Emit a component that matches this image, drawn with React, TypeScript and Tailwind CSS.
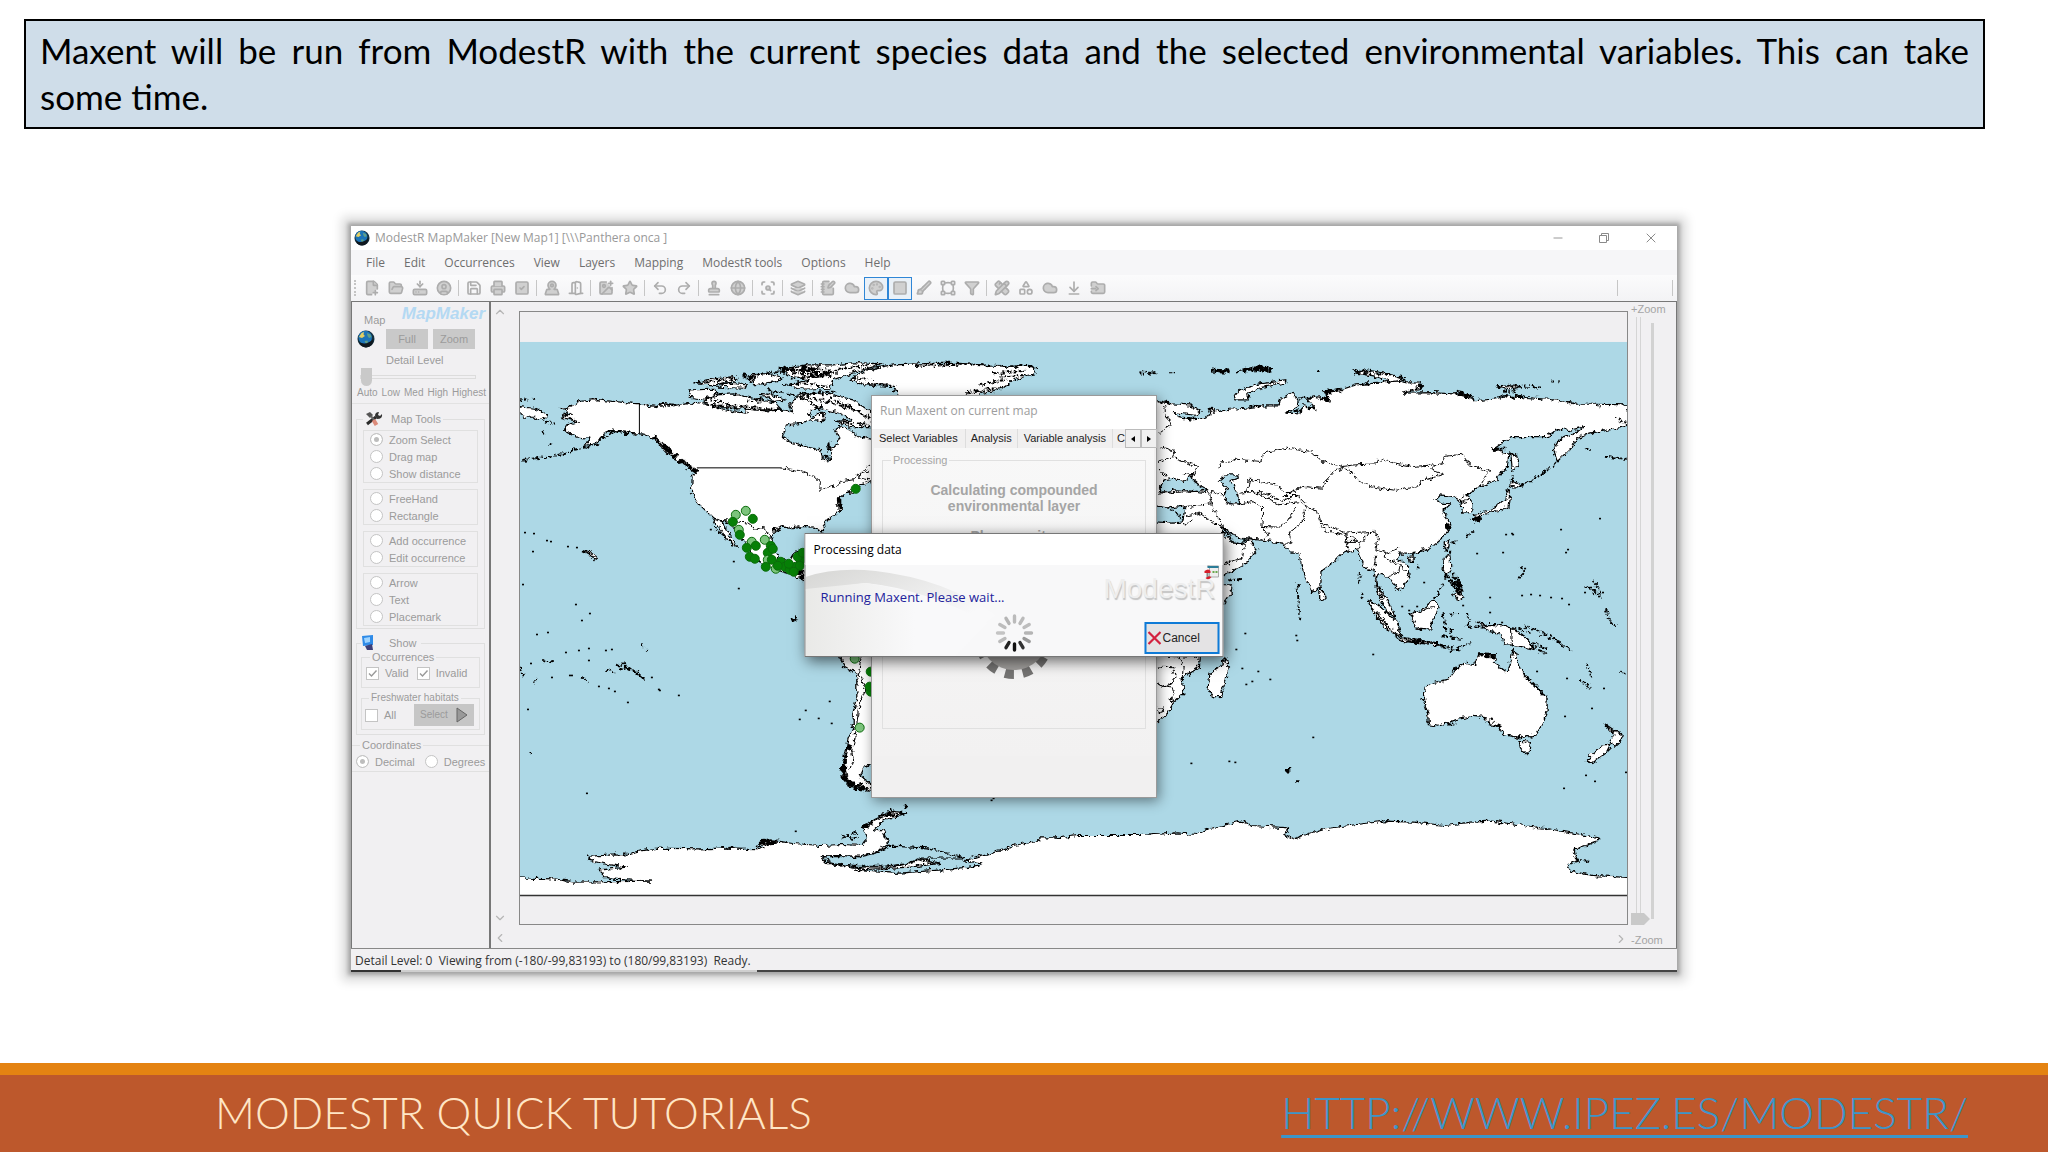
import * as React from "react";
import {
  ArrowDownToLine,
  Brush,
  ChevronDown,
  ChevronLeft,
  ChevronRight,
  ChevronUp,
  CircleUser,
  Cloud,
  DoorOpen,
  FilePlus2,
  FolderInput,
  FolderOpen,
  Funnel,
  Globe,
  HardDriveDownload,
  ImagePlus,
  Layers,
  type LucideIcon,
  MapPinned,
  Minus,
  NotebookPen,
  Palette,
  PencilRuler,
  Printer,
  Redo2,
  Save,
  ScanSearch,
  Shapes,
  Square,
  SquareCheck,
  Stamp,
  Star,
  Undo2,
  VectorSquare,
  X,
} from "lucide-react";

type ToolItem = { readonly icon: LucideIcon; readonly label: string; readonly active?: boolean; readonly solid?: boolean };

const MENU = ["File", "Edit", "Occurrences", "View", "Layers", "Mapping", "ModestR tools", "Options", "Help"];

const TOOL_GROUPS: ReadonlyArray<ReadonlyArray<ToolItem>> = [
  [
    { icon: FilePlus2, label: "New map", solid: true },
    { icon: FolderOpen, label: "Open map", solid: true },
    { icon: HardDriveDownload, label: "Import", solid: true },
    { icon: CircleUser, label: "Open from database", solid: true },
  ],
  [
    { icon: Save, label: "Save" },
    { icon: Printer, label: "Print", solid: true },
    { icon: SquareCheck, label: "Check", solid: true },
  ],
  [
    { icon: MapPinned, label: "Places", solid: true },
    { icon: DoorOpen, label: "Close map" },
  ],
  [
    { icon: ImagePlus, label: "Add image", solid: true },
    { icon: Star, label: "Favourites", solid: true },
  ],
  [
    { icon: Undo2, label: "Undo" },
    { icon: Redo2, label: "Redo" },
  ],
  [
    { icon: Stamp, label: "Download occurrences", solid: true },
    { icon: Globe, label: "World", solid: true },
  ],
  [{ icon: ScanSearch, label: "Inspect", solid: true }],
  [{ icon: Layers, label: "Layers", solid: true }],
  [
    { icon: NotebookPen, label: "Edit data", solid: true },
    { icon: Cloud, label: "Cloud", solid: true },
    { icon: Palette, label: "Show colours", active: true, solid: true },
    { icon: Square, label: "Show frame", active: true, solid: true },
    { icon: Brush, label: "Clean", solid: true },
    { icon: VectorSquare, label: "Cut" },
    { icon: Funnel, label: "Filter", solid: true },
  ],
  [
    { icon: PencilRuler, label: "Measure", solid: true },
    { icon: Shapes, label: "Polygon" },
    { icon: Cloud, label: "Area", solid: true },
    { icon: ArrowDownToLine, label: "Anchor" },
    { icon: FolderInput, label: "Export", solid: true },
  ],
];

// Land outlines. Each sheet carries its own digitising origin and scale.
const AMERICA_LAND = [
  "M180 235L205 232L235 215L285 209L345 215L418 222L470 230L490 220L520 228L560 218L600 222L640 222L660 235L700 245L735 250L740 238L800 243L860 240L880 250L870 225L900 190L930 215L960 222L925 250L940 270L910 280L860 285L848 320L870 335L910 348L962 360L968 385L985 395L998 380L985 355L1015 345L1018 325L1005 300L1020 290L1050 300L1075 320L1115 328L1140 400L1115 455L1080 465L1065 490L1040 490L1020 505L1025 540L985 570L970 590L975 625L965 605L940 592L910 590L880 597L850 592L825 605L815 635L825 660L840 690L870 690L885 665L930 655L930 760L880 735L845 725L800 705L760 690L735 640L715 610L690 580L665 572L680 600L712 650L690 640L655 590L640 565L600 525L575 490L577 440L590 430L540 395L500 370L460 325L430 313L365 310L340 300L315 310L295 335L250 350L270 325L230 322L195 305L200 285L235 275L180 262L215 252L195 240Z",
  "M60 230L100 235L145 255L130 268L105 262L80 262L60 255Z",
  "M570 180L640 178L655 190L620 208L565 202Z",
  "M610 215L650 195L700 192L760 205L830 220L845 240L780 240L700 232L640 228Z",
  "M585 162L620 150L700 140L715 150L650 165Z",
  "M650 172L690 160L740 165L735 175Z",
  "M750 135L800 132L850 145L830 155L760 165Z",
  "M840 118L920 105L1000 105L1070 98L1150 102L1090 120L1040 135L1000 150L990 175L900 178L870 165L930 150L880 140Z",
  "M780 190L820 195L860 210L820 215Z",
  "M900 200L940 190L1000 195L1060 210L1120 250L1160 290L1100 290L1050 290L1005 275L1060 270L1020 250L960 235L930 215Z",
  "M950 255L980 250L970 275L930 272Z",
  "M1050 150L1100 120L1180 105L1300 100L1380 100L1480 108L1600 110L1610 130L1540 150L1510 175L1450 190L1400 210L1200 200L1185 170L1100 165Z",
  "M245 662L275 670L292 686L282 690L270 675Z",
];

const AMERICA_BORDERS = [
  "M845 414L900 422L945 440L962 455L960 482L1005 468L1030 455L1060 450L1085 425L1115 405",
  "M640 565L665 572L700 575L745 580L770 600L790 592L815 628",
  "M1115 420L1085 430L1080 445L1110 450",
];

const AMERICA_ROUGH = [
  "M70 390L110 385L140 381M150 380L190 372L230 358L260 352L300 340",
  "M270 345L310 325L345 305M190 250L215 268M60 208L85 210M98 207L102 206M125 305L135 310M150 338L155 343M135 275L165 282",
  "M590 160L640 155L700 145M640 165L700 155M760 140L820 128L900 120L980 118M850 112L910 125L960 108M870 150L930 135L1040 115L1110 106M850 165L900 160L990 168M880 130L1020 128M900 142L1000 138",
  "M620 205L690 225L760 232L840 238M640 225L720 240M800 180L880 195L940 188L1010 185M920 200L1000 220L1080 245M990 205L1060 235L1115 270M950 230L975 262M1010 275L1110 285M780 205L830 185M970 190L960 255",
  "M1015 215L1070 240L1110 262M1050 145L1120 150M1080 160L1180 168M740 215L800 210M480 228L520 222",
  "M640 590L700 645M1040 490L1070 478M820 600L850 592L900 590M900 700L915 730",
  "M1250 108L1400 104L1560 110M1440 165L1520 150M1480 130L1580 122M1400 190L1460 180L1510 170M1180 180L1200 190",
  "M1560 105L1620 112M1500 140L1570 135M190 300L215 312M330 303L395 310",
];

const AMERICA_DENSE = [
  "M460 322L485 342L512 365M540 392L588 424M495 350L530 385M840 118L880 120M905 112L945 122M1018 505L1020 540M880 865L895 875M875 872L890 866M895 690L908 750M985 340L990 365M975 375L992 388M730 135L765 148M930 140L990 132",
];

const EURASIA_LAND = [
  "M30 180L60 184L100 192L150 195L185 215L170 226L105 218L120 232L150 240L180 238L215 225L210 205L235 215L270 208L320 205L360 198L420 198L422 180L455 160L475 175L478 200L440 220L485 222L492 195L530 210L500 175L550 170L575 180L550 155L610 148L650 135L730 128L760 120L800 128L850 130L845 148L790 160L880 158L940 162L980 160L1010 182L1060 178L1100 168L1150 172L1230 178L1285 185L1310 193L1370 193L1468 195L1468 258L1400 272L1340 282L1310 300L1295 325L1255 365L1243 330L1260 300L1310 280L1335 260L1290 272L1265 265L1225 290L1120 290L1060 330L1110 340L1105 380L1070 420L1020 442L985 465L998 490L998 518L970 520L965 488L940 470L905 465L890 480L905 490L935 492L910 515L925 535L935 560L905 600L870 628L820 640L780 640L775 655L805 680L812 715L780 755L755 720L725 700L712 710L715 740L750 790L768 830L740 815L712 750L705 690L680 690L655 630L610 640L580 670L545 695L545 740L520 762L495 710L478 640L455 640L430 610L375 602L330 598L300 595L265 575L245 555L250 580L280 610L315 612L328 598L355 630L320 670L250 710L30 710Z",
  "M30 735H278L275 760L250 795L30 960Z",
  "M285 170L300 150L360 132L440 122L438 130L370 142L325 160L330 180L290 180Z",
  "M645 98L680 90L740 100L800 120L760 125L700 108Z",
  "M1070 140L1110 133L1145 140L1110 150Z",
  "M1115 340L1130 345L1138 380L1120 388Z",
  "M1105 440L1120 425L1148 435L1130 445Z",
  "M1105 450L1115 465L1110 500L1080 512L1050 518L1025 528L1015 545L1005 525L1040 515L1080 495L1100 480Z",
  "M915 610L932 600L928 625L918 632Z",
  "M808 655L825 650L825 665L810 665Z",
  "M915 655L932 645L935 680L925 710L912 690Z",
  "M940 762L965 750L975 775L955 782Z",
  "M542 745L560 770L548 782L538 765Z",
  "M685 785L715 800L770 850L785 890L745 870L710 830Z",
];

const EURASIA_WATER = [
  "M60 445L75 420L105 415L130 425L160 403L155 415L185 440L205 450L170 455L110 450L65 458Z",
  "M240 420L260 405L295 405L297 415L272 425L290 450L302 492L270 492L255 460L265 445Z",
  "M30 495L90 505L137 498L130 546L100 550L30 545Z",
  "M245 560L275 580L300 595L320 600L305 612L280 605Z",
];

const EURASIA_BORDERS = [
  "M235 385L245 370L290 358L365 365L370 340L440 325L515 335L550 365L610 380L650 375L710 372L715 358L770 370L820 380L885 375L912 372L915 350L970 343L990 375L1050 393L1025 435",
  "M610 380L640 400L660 425L700 442L770 452L835 440L845 425L912 402L875 390L885 375",
  "M610 382L575 400L548 445L490 440L445 460L410 435L330 418L325 455L380 460L430 485L470 465",
  "M300 460L345 455L420 495L480 485L500 500L535 515L545 550L620 580L700 575L718 590L710 630L740 640L780 625",
  "M300 492L340 485L370 502L368 560L415 562L445 545L470 500M370 562L385 585L375 602",
  "M495 505L495 540L450 580L455 610L430 610",
  "M545 560L560 572L640 595L655 605L620 605L630 630M620 580L625 625M690 580L665 610L655 630M710 645L705 680M740 640L735 655L780 680L775 700L750 710M760 660L800 690",
  "M215 470L225 510L248 555M140 500L215 492M140 530L180 520L250 565M160 540L130 560M315 612L310 655L250 675M215 455L245 465L265 490",
  "M75 190L78 220L95 255L60 280M60 320L100 330L105 350L55 365M105 355L175 380L165 400L130 405M60 385L80 410",
  "M55 460L170 455L215 460L215 492M430 470L480 470L500 490M960 480L1005 450M990 480L960 490",
];

const EURASIA_ROUGH = [
  "M215 92L275 95M290 95L340 84L405 85M320 90L395 92M0 97L55 100M90 97H112M640 90L700 95L760 108L800 112M650 98L720 102M535 90H545",
  "M1075 138L1140 140M1155 140L1200 143M1095 155L1130 158M1240 125H1245M1258 127H1262",
  "M55 185L90 186M120 232L180 238M210 205L225 220M330 198L365 200M440 218L490 210M555 155L610 148M680 130L730 128M790 158L850 140M950 158L1000 170M1100 170L1160 172M1285 190H1300M1370 195L1385 200M1435 235L1463 250M480 175L530 172L572 182M500 200L530 210",
  "M1060 330L1100 325M1110 340L1130 350M1120 390L1122 430M1148 435L1190 415L1240 380L1255 365M1340 325L1355 332M1395 348L1440 355L1463 357",
  "M1000 535L1015 550L1020 525M940 608L960 605M980 590L1005 575M905 600L935 560M820 640L870 628M835 685L840 680M680 690L700 685M662 700L660 730M665 760L670 775",
  "M930 630V645M915 710L950 715L965 740M940 700L960 720L970 755M930 725L965 730M910 735L880 790M945 740L960 765M920 700L955 760M720 740L730 780M270 722L305 718M475 730L480 845M60 450L100 460M90 500L130 540M440 460L470 455M245 560L270 585",
  "M1145 680L1155 700L1140 715M1340 740L1390 770M1360 720L1385 760M1400 810L1410 835L1430 860",
];

const EURASIA_DENSE = [
  "M310 92L350 86L400 88M225 93L270 95M555 157L605 150M560 175L575 185M840 130L850 145M960 160L1000 170M1005 540L1015 530M942 725L965 740M955 740L962 765M1060 330L1078 328M925 555L930 570",
];

const SOUTH_LAND = [
  "M945 160L965 200L1000 222L1000 300L990 340L990 380L975 420L968 470L955 520L975 555L1035 575L1045 560L1010 530L1020 505L1050 490V160Z",
  "M1820 165L1960 170L1957 205L1912 235L1917 280L1887 310L1872 340L1842 368L1820 368Z",
  "M2033 172L2042 190L2035 240L2020 290L1998 292L1984 270L1990 220L2020 200Z",
  "M2590 262L2620 248L2660 238L2680 208L2710 188L2732 195L2740 165L2790 165L2787 190L2825 220L2832 190L2840 145L2850 190L2870 225L2910 270L2935 300L2935 330L2925 365L2905 405L2860 415L2815 405L2800 380L2775 375L2765 355L2730 350L2680 360L2630 380L2602 375L2600 340L2588 300Z",
  "M2856 425L2888 428L2885 455L2875 462L2860 445Z",
  "M3095 372L3120 390L3148 405L3140 425L3125 440L3112 430L3122 405Z",
  "M3045 485L3060 465L3095 435L3112 435L3100 460L3060 492Z",
  "M2433 5L2460 15L2515 65L2525 108L2490 90L2450 40Z",
  "M2550 42L2580 30L2620 0L2630 20L2615 60L2610 88L2570 85Z",
  "M2740 65L2765 75L2790 75L2840 85L2880 120L2900 150L2860 140L2820 135L2800 100L2770 95Z",
  "M2512 112L2560 120L2620 128L2650 138L2590 132L2530 125Z",
  "M30 835L150 838L210 848L425 845L300 838L275 812L355 803L300 795L248 782L248 770L350 765L390 755L440 746L560 748L640 745L740 748L725 730L760 722L820 732L900 738L960 735L1015 738L1030 715L1020 690L1050 660L1100 635L1140 640L1070 665L1045 690L1075 695L1088 735L1050 760L1010 770L900 770L915 790L990 803L1080 802L1140 795L1180 778L1235 792L1150 803L990 812L1110 822L1230 812L1345 800L1350 790L1300 785L1340 770L1400 755L1440 738L1510 725L1510 715L1560 715L1620 708H1792L1900 700L1950 705L1980 690L2075 665L2110 678L2210 685L2200 705L2225 718L2300 690L2400 675L2480 665L2560 668L2650 678L2720 668L2780 665L2870 678L2950 690L3080 715L3070 728L3010 750L3020 785L2990 795L3000 815L3060 828L3190 836V920H20Z",
];

const SOUTH_WATER = [
  "M905 770L955 768L1010 772L1050 762L1090 740L1200 745L1300 775L1180 776L1140 793L1080 800L990 801L925 788Z",
];

const SOUTH_BORDERS = [
  "M1012 170L1005 222L1025 270L1005 320L1000 380L990 440M985 450L990 480L980 510",
  "M1842 210L1860 200L1885 205L1895 235L1880 255L1860 262L1842 250M1862 262L1885 265L1890 290M1845 322L1858 322L1860 335L1848 340ZM1900 170L1915 200L1912 235M1875 298L1887 295L1885 308Z",
  "M2832 85L2835 140M2555 40L2620 20",
];

const SOUTH_ROUGH = [
  "M1015 685L1050 665L1110 632M1060 650L1140 640M1070 640L1100 632M1130 622H1140M955 705L985 718L1010 712M960 715L1000 700M725 730H800M720 742L780 725M915 790L960 800M900 770H955M1185 785L1235 792M1088 735L1080 705M620 745H660M245 778L260 782M320 765H350",
  "M325 195L360 205L395 230M340 190L375 215M295 210L320 218M335 205L390 215M375 210L405 240M118 184L148 188M230 235L252 245M395 130L412 155M95 250L105 232M55 205L68 232M85 460L87 467",
  "M2440 20L2500 90M2520 120L2570 128L2630 130M2640 140L2690 150M2660 155L2720 130M2640 110L2700 118M2645 40L2650 100M2660 45L2690 40M2665 85L2665 105M2710 40L2720 90M2735 65L2760 75M2710 75L2760 85",
  "M2855 85L2890 100M2870 80L2930 100L2915 110M2890 140L2930 160M2895 130L2935 150M2940 110L2990 145M2955 115L3005 155M3045 190L3060 230M3025 240L3058 265M3140 215L3155 225M2535 115L2600 125",
  "M2740 165L2790 168M2790 375L2810 385M2668 212L2690 200M2580 298L2595 300M2895 250L2935 295M2850 410H2890M3095 375L3125 400M3045 485L3060 490M2775 355L2800 385M2030 175L2042 200M3010 750L3025 745M3015 780L3050 784M2655 372L2680 372M2490 664L2480 668M2200 512L2215 512M2232 548H2245",
];

const SOUTH_DENSE = [
  "M972 442L985 448M970 462L964 495L962 525L975 550L1000 565L1030 573M962 500L968 540L990 555M1000 552L1020 565",
  "M2740 165L2755 163M2760 168L2788 170M2790 375L2806 382M1018 682L1035 675M730 728L780 726M2202 512H2212M2565 126L2585 128",
];

const ISLETS: ReadonlyArray<readonly [number, number]> = [
  [524, 532], [533, 533], [546, 540], [550, 541], [532, 551], [567, 546], [576, 547], [733, 561], [738, 588], [522, 584],
  [575, 604], [589, 613], [581, 620], [710, 529], [678, 695], [527, 709], [805, 710], [818, 718], [799, 719], [829, 701],
  [831, 723], [586, 793], [795, 831], [565, 652], [588, 648], [578, 650], [605, 650], [611, 649], [530, 663], [551, 677],
  [571, 675], [598, 686], [608, 688], [614, 691], [658, 689], [651, 677], [659, 690], [588, 660], [569, 675], [536, 634],
  [547, 632], [1245, 633], [1236, 649], [1242, 668], [1252, 681], [1246, 684], [1270, 679], [1258, 671], [1296, 635], [1297, 640],
  [1313, 737], [1191, 763], [1229, 761], [1235, 762], [1373, 654], [1565, 716], [1592, 708], [1564, 788], [1586, 775], [1595, 781],
  [1626, 772], [1567, 678], [1604, 688], [1537, 671], [1506, 534], [1503, 552], [1513, 534], [1525, 568], [1561, 529], [1566, 552],
  [1600, 518], [1522, 595], [1531, 594], [1540, 595], [1551, 597], [1562, 598], [1569, 604], [1585, 592], [1591, 587], [1599, 596],
  [1490, 597], [1477, 553], [1512, 533], [1424, 582], [1603, 592], [1568, 549], [1463, 605], [1457, 597], [1451, 631], [1490, 612],
  [1502, 622], [1389, 614], [1402, 606], [1409, 610], [1417, 606], [1420, 629], [991, 800], [993, 798], [524, 399], [627, 702],
];

const OCCURRENCES: ReadonlyArray<readonly [number, number, boolean]> = [
  [746, 511, false], [736, 515, false], [753, 519, true], [733, 522, true], [739, 530, false], [740, 535, true],
  [752, 542, false], [765, 540, false], [747, 548, true], [756, 546, true], [771, 546, true], [768, 553, true],
  [773, 549, true], [750, 557, true], [755, 559, true], [768, 560, false], [766, 567, true], [772, 560, true],
  [776, 569, false], [781, 562, true], [785, 567, true], [790, 570, true], [796, 567, true], [801, 560, true],
  [798, 557, true], [803, 553, true], [800, 566, true], [778, 566, true], [789, 564, true], [794, 572, true],
  [856, 489, true], [855, 659, false], [871, 672, true], [871, 692, true], [870, 687, true], [860, 728, false],
];

const Sheet = ({
  place,
  land,
  water = [],
  borders,
  rough,
  dense,
}: {
  readonly place: string;
  readonly land: ReadonlyArray<string>;
  readonly water?: ReadonlyArray<string>;
  readonly borders: ReadonlyArray<string>;
  readonly rough: ReadonlyArray<string>;
  readonly dense: ReadonlyArray<string>;
}) => (
  <g transform={place} strokeWidth="3.6" strokeLinejoin="round" filter="url(#coast)">
    {land.map((d) => <path key={d} d={d} fill="#fff" stroke="#000" />)}
    {water.map((d) => <path key={d} d={d} fill="#add8e6" stroke="#000" />)}
    {borders.map((d) => <path key={d} d={d} fill="none" stroke="#000" strokeWidth="3" />)}
    {rough.map((d) => <path key={d} d={d} fill="none" stroke="#000" strokeWidth="6" strokeDasharray="9 4 4 6 13 3" />)}
    {dense.map((d) => <path key={d} d={d} fill="none" stroke="#000" strokeWidth="13" strokeDasharray="14 2" />)}
  </g>
);

const WorldMap = () => (
  <svg viewBox="520 312 1108 613" className="block w-full bg-[#f0eff1]" role="img" aria-label="World map">
    <defs>
      <filter id="coast" x="-5%" y="-5%" width="110%" height="110%">
        <feTurbulence type="fractalNoise" baseFrequency="0.07" numOctaves="3" seed="4" />
        <feDisplacementMap in="SourceGraphic" scale="19" xChannelSelector="R" yChannelSelector="G" />
      </filter>
      <clipPath id="world">
        <rect x="520" y="342" width="1108" height="554" />
      </clipPath>
    </defs>
    <rect x="520" y="342" width="1108" height="554" fill="#add8e6" />
    <g clipPath="url(#world)">
      <Sheet
        place="translate(500 330) scale(.3333)"
        land={AMERICA_LAND}
        borders={AMERICA_BORDERS}
        rough={AMERICA_ROUGH}
        dense={AMERICA_DENSE}
      />
      <Sheet
        place="translate(1140 340) scale(.3333)"
        land={EURASIA_LAND}
        water={EURASIA_WATER}
        borders={EURASIA_BORDERS}
        rough={EURASIA_ROUGH}
        dense={EURASIA_DENSE}
      />
      <Sheet
        place="translate(500 600) scale(.3571 .3333)"
        land={SOUTH_LAND}
        water={SOUTH_WATER}
        borders={SOUTH_BORDERS}
        rough={SOUTH_ROUGH}
        dense={SOUTH_DENSE}
      />
      <path d="M639.5 404V434M697 468H782" stroke="#000" />
      {ISLETS.map(([x, y], i) => <rect key={i} x={x} y={y} width="2" height="1.6" />)}
      {OCCURRENCES.map(([x, y, full], i) => (
        <circle key={i} cx={x} cy={y} r="4.5" fill={full ? "#078007" : "#7cc47c"} stroke="#0b6b0b" />
      ))}
    </g>
    <path d="M520 896H1628" stroke="#333" strokeWidth="1.5" />
  </svg>
);

const GlobeIcon = ({ className }: { readonly className: string }) => (
  <svg viewBox="0 0 18 18" className={className} aria-hidden="true">
    <circle cx="9" cy="9" r="8.5" fill="#14303f" />
    <circle cx="8.2" cy="7.6" r="6.8" fill="#1c74b8" />
    <path d="M2 7L4.5 3L7 2L6.5 4.5L8 6L5 8Z" fill="#e3cf63" />
    <path d="M10 3L13.5 4.5L14.5 7L12 8L10.5 6ZM7.5 11L10.5 10.5L11 12.5L9 14Z" fill="#5fa08a" />
    <path d="M2 12Q9 16 16.5 9Q16 17 9 17.5Q4 17 2 12Z" fill="#10181e" />
  </svg>
);

const ToolsIcon = () => (
  <svg viewBox="0 0 18 16" className="h-4 w-[18px]" aria-hidden="true">
    <path d="M2 13L11 6" stroke="#2b2b2b" strokeWidth="3" />
    <path d="M10 5Q10 1 14 1L13 4L15 5L17 3Q18 8 12 8Z" fill="#333" />
    <path d="M1 3L5 1L8 4L5 7Z" fill="#555" />
    <path d="M6 5L9 9" stroke="#666" strokeWidth="2" />
    <path d="M8.500 9L11.500 14" stroke="#dc8b7b" strokeWidth="4" />
  </svg>
);

const Radio = ({ name, label, checked }: { readonly name: string; readonly label: string; readonly checked?: boolean }) => (
  <label className="flex h-[17px] items-center gap-1.5 whitespace-nowrap">
    <input
      type="radio"
      name={name}
      defaultChecked={checked}
      className="size-[13px] shrink-0 appearance-none rounded-full border border-[#c4c4c4] bg-white checked:bg-[#bdbdbd] checked:shadow-[inset_0_0_0_3px_#fff]"
    />
    {label}
  </label>
);

const Tick = ({ label, checked }: { readonly label: string; readonly checked?: boolean }) => (
  <label className="flex items-center gap-1.5">
    <span className="relative size-[13px]">
      <input type="checkbox" defaultChecked={checked} className="block size-[13px] appearance-none border border-[#c4c4c4] bg-white" />
      {checked && (
        <svg viewBox="0 0 13 13" className="pointer-events-none absolute inset-0" aria-hidden="true">
          <path d="M3 6.5L5.5 9L10.5 3.5" fill="none" stroke="#999" strokeWidth="1.4" />
        </svg>
      )}
    </span>
    {label}
  </label>
);

const TOOL_BOXES = [
  ["Zoom Select", "Drag map", "Show distance"],
  ["FreeHand", "Rectangle"],
  ["Add occurrence", "Edit occurrence"],
  ["Arrow", "Text", "Placemark"],
];

const Sidebar = () => (
  <aside className="w-[140px] shrink-0 border-r-2 border-l border-r-[#777] border-l-[#777] bg-[#f1f0f2] font-['Liberation_Sans',sans-serif] text-[11px] leading-4 text-[#9b9b9b]">
    <div className="flex h-[27px] justify-between pt-1 pr-1 pl-3">
      <span className="pt-1.5">Map</span>
      <span className="text-[17px] leading-4 font-bold text-[#b4d9f3] italic">MapMaker</span>
    </div>
    <div className="flex items-center gap-[5px] pl-[5px]">
      <GlobeIcon className="mr-1.5 size-[18px]" />
      <button type="button" className="h-5 w-[42px] bg-[#c9c9c9]">Full</button>
      <button type="button" className="h-5 w-[42px] bg-[#c9c9c9]">Zoom</button>
    </div>
    <label htmlFor="detail" className="mt-1 block pl-[34px] leading-[14px]">Detail Level</label>
    <input
      id="detail"
      type="range"
      min="0"
      max="4"
      defaultValue="0"
      className="ml-2 block h-5 w-[116px] appearance-none bg-transparent [&::-webkit-slider-runnable-track]:h-1 [&::-webkit-slider-runnable-track]:border [&::-webkit-slider-runnable-track]:border-[#dcdcdc] [&::-webkit-slider-thumb]:-mt-2 [&::-webkit-slider-thumb]:h-[18px] [&::-webkit-slider-thumb]:w-[11px] [&::-webkit-slider-thumb]:appearance-none [&::-webkit-slider-thumb]:rounded-b-md [&::-webkit-slider-thumb]:bg-[#c9c9c9]"
    />
    <div className="flex justify-between border-b border-[#e2e2e2] pr-[3px] pb-1 pl-[5px] text-[10px] leading-3">
      {["Auto", "Low", "Med", "High", "Highest"].map((level) => <span key={level}>{level}</span>)}
    </div>
    <fieldset className="mx-1 mt-1.5 border border-[#dfdfdf] px-[6px] pb-0.5">
      <legend className="flex items-center gap-2 px-0.5 leading-[18px]">
        <ToolsIcon />
        Map Tools
      </legend>
      <div className="flex flex-col gap-1.5 pt-0.5">
        {TOOL_BOXES.map((box, i) => (
          <div key={i} className="border border-[#e0e0e0] pl-1.5">
            {box.map((label) => <Radio key={label} name="tool" label={label} checked={label === "Zoom Select"} />)}
          </div>
        ))}
      </div>
    </fieldset>
    <fieldset className="mx-1 mt-1.5 border border-[#dfdfdf] px-1 pb-1">
      <legend className="flex items-center gap-3.5 pr-1">
        <svg viewBox="0 0 14 16" className="h-4 w-3.5" aria-hidden="true">
          <path d="M1 1L12 0V10L2 11Z" fill="#2f8be8" />
          <path d="M3 3L9 2V7L4 8Z" fill="#9fd4ff" />
          <path d="M4 11L11 9L12 15L6 15Z" fill="#3d3f78" />
        </svg>
        Show
      </legend>
      <fieldset className="border border-[#e0e0e0] px-1 pt-0.5 pb-1.5">
        <legend className="ml-1 px-0.5 leading-3">Occurrences</legend>
        <div className="flex gap-2">
          <Tick label="Valid" checked />
          <Tick label="Invalid" checked />
        </div>
      </fieldset>
      <fieldset className="mt-1 border border-[#e0e0e0] px-[3px] pb-[3px]">
        <legend className="ml-1 px-0.5 text-[10px] leading-3">Freshwater habitats</legend>
        <div className="flex items-center justify-between pr-0.5">
          <Tick label="All" />
          <button type="button" className="flex h-[22px] w-[60px] items-center justify-between bg-[#c6c6c6] px-1.5 text-[10px]">
            Select
            <svg viewBox="0 0 12 16" className="h-4 w-3" aria-hidden="true">
              <path d="M1 1L11 8L1 15Z" fill="#999" stroke="#666" />
            </svg>
          </button>
        </div>
      </fieldset>
    </fieldset>
    <fieldset className="mt-0.5 border-y border-[#e0e0e0] pb-px pl-1">
      <legend className="ml-1 px-0.5">Coordinates</legend>
      <div className="flex gap-2.5">
        <Radio name="coordinates" label="Decimal" checked />
        <Radio name="coordinates" label="Degrees" />
      </div>
    </fieldset>
  </aside>
);

const Toolbar = () => (
  <div className="flex h-[27px] items-center border-b border-[#777] bg-linear-to-b from-[#fbfbfc] to-[#f3f3f5] pr-1 pl-[3px] text-[#adadad]">
    <span className="mr-1 h-4 border-l-2 border-dotted border-[#c4c4c4]" />
    {TOOL_GROUPS.map((group, i) => (
      <div key={i} className="flex items-center">
        {i > 0 && <span className="mr-[3px] ml-[2px] h-4 w-px bg-[#c6c6c6]" />}
        {group.map(({ icon: Icon, label, active, solid }) => (
          <button
            key={label}
            type="button"
            aria-label={label}
            className={active
              ? "flex h-[23px] w-6 items-center justify-center border border-[#2f86d6] bg-[#eaf1f8]"
              : "flex h-[23px] w-6 items-center justify-center"}
          >
            <Icon className={solid ? "size-4 fill-[#d0d0d0]" : "size-4"} strokeWidth={2.5} />
          </button>
        ))}
      </div>
    ))}
    <span className="mr-[54px] ml-auto h-4 w-px bg-[#c6c6c6]" />
    <span className="h-4 w-px bg-[#c6c6c6]" />
  </div>
);

const MapArea = () => (
  <div className="flex min-w-0 flex-1 bg-[#f1f0f2] text-[#b5b5b5]">
    <div className="flex w-7 shrink-0 flex-col items-center justify-between py-[3px] pr-2.5">
      <ChevronUp className="size-3.5" />
      <div className="flex flex-col gap-1.5">
        <ChevronDown className="size-3.5" />
        <ChevronLeft className="size-3.5" />
      </div>
    </div>
    <div className="min-w-0 flex-1 pt-[9px]">
      <div className="border border-[#888]">
        <WorldMap />
      </div>
      <div className="flex h-[23px] items-center justify-end pt-1">
        <ChevronRight className="size-3.5" />
      </div>
    </div>
    <div className="flex w-[49px] shrink-0 flex-col border-r border-[#777] pl-[3px] font-['Liberation_Sans',sans-serif] text-[11px] leading-[15px] text-[#a5a5a5]">
      <label htmlFor="zoom">+Zoom</label>
      <div className="relative flex flex-1 gap-[10px] pb-1 pl-[5px]">
        <span className="w-[5px] border-x border-[#d5d5d5]" />
        <span className="my-1.5 w-[3px] bg-[#d2d2d2]" />
        <input id="zoom" type="range" defaultValue="0" className="absolute inset-0 h-full w-full opacity-0 [direction:rtl] [writing-mode:vertical-lr]" />
        <svg viewBox="0 0 19 12" className="absolute bottom-1 left-0 h-3 w-[19px]" aria-hidden="true">
          <path d="M0 0H13L19 6L13 12H0Z" fill="#c9c9c9" />
        </svg>
      </div>
      <span className="pt-1">-Zoom</span>
    </div>
  </div>
);

const MaxentDialog = () => (
  <section className="absolute top-[169px] left-1/2 flex h-[403px] w-[286px] -translate-x-1/2 flex-col border border-[#9a9a9a] bg-[#f1f0f0] shadow-[2px_3px_12px_rgba(0,0,0,0.45)]">
    <h2 className="h-[33px] bg-white pl-2 font-['Open_Sans',sans-serif] text-xs leading-[30px] text-[#9d9d9d]">Run Maxent on current map</h2>
    <div className="flex h-[19px] items-stretch font-['Liberation_Sans',sans-serif] text-[11px] text-[#222]">
      <button type="button" className="border-r border-[#ddd] px-[7px] whitespace-nowrap">Select Variables</button>
      <button type="button" className="border-r border-[#ddd] px-[5px]">Analysis</button>
      <button type="button" className="border-r border-[#ddd] px-1.5 whitespace-nowrap">Variable analysis</button>
      <button type="button" className="pl-1">C</button>
      <div className="ml-auto flex shrink-0 pr-px">
        <button type="button" aria-label="Previous tab" className="flex w-4 items-center justify-center border border-[#bbb] bg-[#f0f0f0]">
          <svg viewBox="0 0 4 6" className="h-1.5 w-1" aria-hidden="true"><path d="M4 0V6L0 3Z" /></svg>
        </button>
        <button type="button" aria-label="Next tab" className="flex w-4 items-center justify-center border border-[#bbb] bg-[#f0f0f0]">
          <svg viewBox="0 0 4 6" className="h-1.5 w-1" aria-hidden="true"><path d="M0 0V6L4 3Z" /></svg>
        </button>
      </div>
    </div>
    <div className="mx-0.5 h-[308px] bg-linear-to-b from-[#f8f8f8] to-[#f2f1f1] px-2 pt-1">
      <fieldset className="h-[277px] border border-[#e0e0e0] font-['Liberation_Sans',sans-serif] text-[#a5a5a5]">
        <legend className="ml-2 px-0.5 text-[11px] leading-4">Processing</legend>
        <p className="mt-3.5 text-center text-sm leading-4 font-bold">
          Calculating compounded
          <br />
          environmental layer
        </p>
        <p className="mt-3.5 text-center text-sm leading-4 font-bold">Please wait...</p>
        <svg viewBox="0 0 80 80" className="mx-auto mt-14 block size-20" aria-hidden="true">
          <circle cx="40" cy="40" r="34" fill="none" stroke="#747372" strokeWidth="10" strokeDasharray="9 8.8" />
          <ellipse cx="40" cy="36" rx="34" ry="34" fill="#a19f9d" />
        </svg>
      </fieldset>
    </div>
  </section>
);

const SPOKES = ["#bbb", "#bbb", "#bdbdbd", "#b5b5b5", "#999", "#333", "#111", "#222", "#bbb", "#c4c4c4", "#bdbdbd", "#b5b5b5"];

const ProgressDialog = () => (
  <section
    role="dialog"
    aria-label="Processing data"
    className="absolute top-[307px] left-1/2 h-[124px] w-[419px] -translate-x-1/2 border border-[#777] bg-[#f8f8f9] shadow-[2px_4px_14px_rgba(0,0,0,0.6)]"
  >
    <h2 className="h-[31px] bg-white pl-2 font-['Open_Sans',sans-serif] text-xs leading-[31px] text-black">Processing data</h2>
    <div className="relative h-[91px] overflow-hidden">
      <svg viewBox="0 0 417 91" className="absolute inset-0" aria-hidden="true">
        <defs>
          <linearGradient id="swoosh" x1="0" y1="0" x2="1" y2="0.6">
            <stop offset="0" stopColor="#d6d6d4" />
            <stop offset="1" stopColor="#f9f9fa" />
          </linearGradient>
          <linearGradient id="haze" x1="0" y1="0" x2="1" y2="0">
            <stop offset="0" stopColor="#e9e9e7" />
            <stop offset="0.6" stopColor="#f9f9fa" />
          </linearGradient>
        </defs>
        <path d="M0 12Q30 2 70 6Q140 14 190 50L180 58Q120 24 60 18L0 26Z" fill="url(#swoosh)" />
        <path d="M0 24L60 18Q130 28 182 58L150 91H0Z" fill="url(#haze)" />
      </svg>
      <div className="relative flex h-full items-start justify-between pl-[15px]">
        <p className="pt-6 font-['Open_Sans',sans-serif] text-[13px] leading-4 text-[#22229c]">Running Maxent. Please wait...</p>
        <div className="flex h-full flex-col items-end justify-between pr-[3px] pb-0.5">
          <div className="relative pt-2 pr-1">
            <span className="block font-['Liberation_Sans',sans-serif] text-[28px] leading-8 text-[#eeeeee] [text-shadow:1px_2px_1px_#c4c4c4]">
              ModestR
            </span>
            <svg viewBox="0 0 16 16" className="absolute top-0 right-0 size-4" aria-hidden="true">
              <path d="M4 1H15V12H6V1Z" fill="#eee" stroke="#aaa" />
              <path d="M4 1H15V3H4Z" fill="#2b7d98" />
              <path d="M9 7H11M12 7H14" stroke="#6aa84f" strokeWidth="2" />
              <path d="M1 6Q5 3 7 6V8H1ZM2 13Q5 16 8 12L5 11Z" fill="#d6202c" />
              <path d="M4 8V12" stroke="#888" strokeWidth="2" />
            </svg>
          </div>
          <button
            type="button"
            className="flex h-8 w-[75px] items-center border-2 border-[#0f7bd7] bg-[#e4e3e4] pl-px font-['Liberation_Sans',sans-serif] text-xs text-[#222]"
          >
            <svg viewBox="0 0 14 14" className="mr-px size-3.5" aria-hidden="true">
              <path d="M1 1L13 13M13 1L1 13" stroke="#d3213f" strokeWidth="2.2" />
            </svg>
            Cancel
          </button>
        </div>
      </div>
      <svg viewBox="-20 -20 40 40" className="absolute top-12 left-1/2 size-10 -translate-x-1/2" aria-label="Working">
        {SPOKES.map((color, i) => (
          <path key={i} d="M0 -11V-17" stroke={color} strokeWidth="3.4" strokeLinecap="round" transform={`rotate(${i * 30})`} />
        ))}
      </svg>
    </div>
  </section>
);

const MapMakerWindow = () => (
  <article className="relative bg-[#f1f0f2] shadow-[0_0_4px_3px_rgba(0,0,0,0.25),0_0_10px_9px_rgba(0,0,0,0.15)]">
    <header className="flex h-6 items-center bg-white pr-[18px] pl-[3px] font-['Open_Sans',sans-serif] text-xs text-[#999]">
      <GlobeIcon className="mr-[5px] size-4" />
      <h1>ModestR MapMaker [New Map1] [\\\Panthera onca ]</h1>
      <div className="ml-auto flex gap-8 text-[#8a8a8a]">
        <button type="button" aria-label="Minimise"><Minus className="size-3.5" strokeWidth={1.5} /></button>
        <button type="button" aria-label="Restore">
          <svg viewBox="0 0 14 14" className="size-3.5" fill="none" stroke="currentColor" aria-hidden="true">
            <path d="M2.5 4.5H9.5V11.5H2.5ZM4.5 4.5V2.5H11.5V9.5H9.5" />
          </svg>
        </button>
        <button type="button" aria-label="Close"><X className="size-4" strokeWidth={1.5} /></button>
      </div>
    </header>
    <nav className="flex h-[25px] items-center gap-[19px] bg-[#f6f6f8] pl-[15px] font-['Open_Sans',sans-serif] text-xs text-[#6e6e6e]">
      {MENU.map((item) => <button key={item} type="button">{item}</button>)}
    </nav>
    <Toolbar />
    <div className="flex border-b border-[#888]">
      <Sidebar />
      <MapArea />
    </div>
    <footer className="h-[21px] pl-1 font-['Open_Sans',sans-serif] text-xs leading-6 whitespace-pre text-[#333]">
      Detail Level: 0  Viewing from (-180/-99,83193) to (180/99,83193)  Ready.
    </footer>
    <div className="flex h-0.5">
      <span className="w-[50px] bg-[#333]" />
      <span className="w-[356px] bg-[#cfcfcf]" />
      <span className="flex-1 bg-[#444]" />
    </div>
    <MaxentDialog />
    <ProgressDialog />
  </article>
);

export default function App() {
  return (
    <div className="flex min-h-screen flex-col bg-white font-['Lato',sans-serif]">
      <p className="mt-[19px] mr-[63px] ml-6 min-h-[110px] border-2 border-black bg-[#cfdde9] px-3.5 pt-1.5 text-justify text-[35px] leading-[46px] text-black">
        Maxent will be run from ModestR with the current species data and the selected environmental variables. This can take
        some&nbsp;time.
      </p>
      <main className="mt-[97px] mb-10 pr-[371px] pl-[351px]">
        <MapMakerWindow />
      </main>
      <footer className="mt-auto flex h-[89px] items-center justify-between border-t-12 border-[#e48312] bg-[#bd582c] pr-20 pb-1 pl-[215px] text-[44px] font-light">
        <span className="text-[#ffe6c6]">MODESTR QUICK TUTORIALS</span>
        <a href="http://www.ipez.es/modestr/" className="text-[#3d95c9] underline decoration-3 underline-offset-6">
          HTTP://WWW.IPEZ.ES/MODESTR/
        </a>
      </footer>
    </div>
  );
}
